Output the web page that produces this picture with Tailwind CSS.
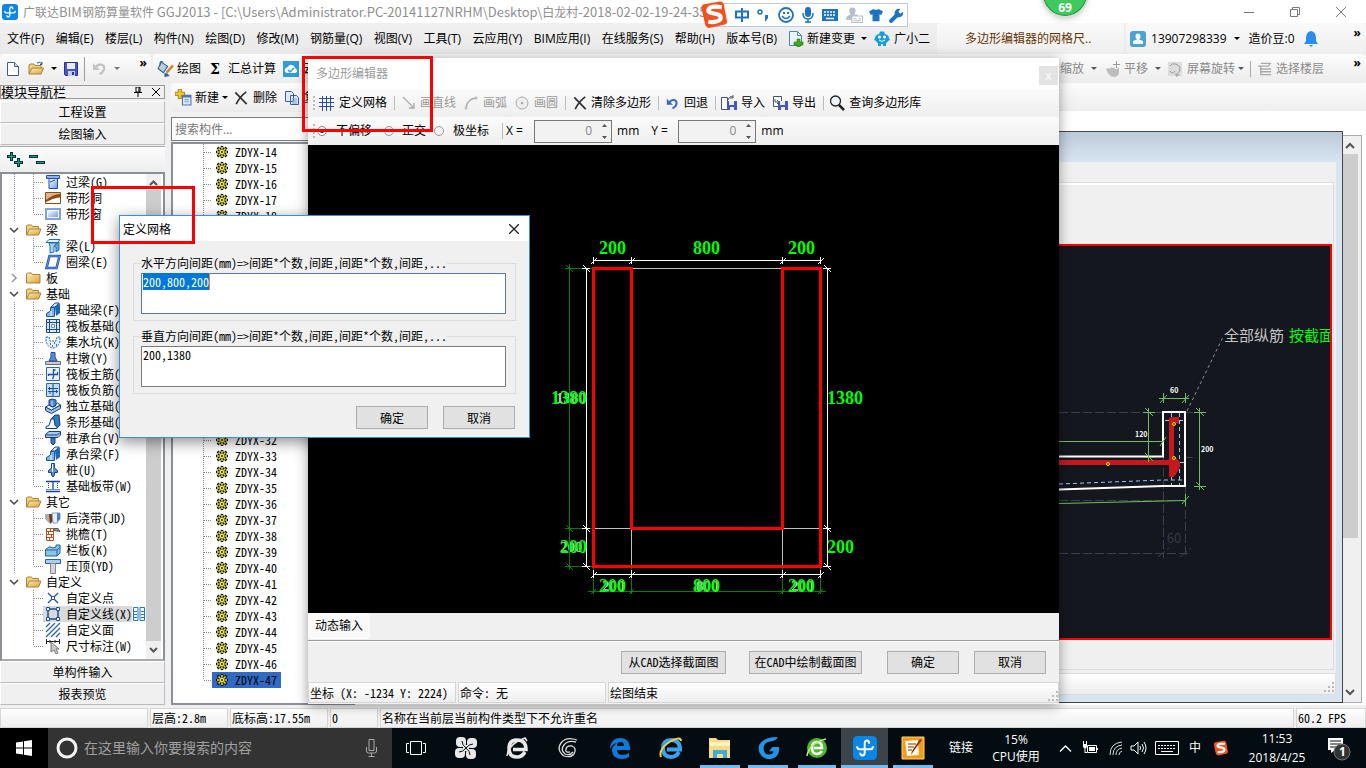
<!DOCTYPE html>
<html lang="zh-CN">
<head>
<meta charset="utf-8">
<title>广联达BIM钢筋算量软件 GGJ2013</title>
<script src="https://cdn.jsdelivr.net/npm/@tailwindcss/browser@4"></script>
</head>
<body class="relative flex h-screen flex-col overflow-hidden bg-[#f0f0f0] font-['Open_Sans','Noto_Sans_CJK_SC',sans-serif] text-xs leading-4 text-black">

<svg class="absolute size-0" aria-hidden="true">
  <defs>
    <linearGradient id="gb" x1="0" y1="0" x2="1" y2="1"><stop offset="0" stop-color="#fff"/><stop offset="1" stop-color="#6d9ae8"/></linearGradient>
    <linearGradient id="gy" x1="0" y1="0" x2="1" y2="1"><stop offset="0" stop-color="#fff1b8"/><stop offset="1" stop-color="#d9a13a"/></linearGradient>
  </defs>
  <symbol id="app" viewBox="0 0 16 16"><rect width="16" height="16" rx="3" fill="#0a86e6"/><path d="M10.800 5.200q0-2.200-1.500-2.200T7.800 5.200v5.800q0 2-1.500 2T4.800 11.200M2.800 6.800v.600q0 1.400 1.400 1.400h7.600q1.400 0 1.400-1.400v-.600" fill="none" stroke="#fff" stroke-width="1.300"/></symbol>
  <symbol id="folderopen" viewBox="0 0 16 16"><path d="M1 13V4l1-1h4l1 1.500h6V7" fill="#f3d27a" stroke="#a8803a"/><path d="M1 13 4 7h11.500L13 13z" fill="url(#gy)" stroke="#a8803a"/></symbol>
  <symbol id="folder" viewBox="0 0 16 16"><path d="M1 13V4l1-1h4l1 1.500h7.500V13z" fill="url(#gy)" stroke="#a8803a"/></symbol>
  <symbol id="undo" viewBox="0 0 16 16"><path d="M4 6.500C7 2.500 13 3 13 7.500c0 3-2 5-5 6.500" fill="none" stroke="currentColor" stroke-width="2.500"/><path d="M1 2v7.500h7.500z" fill="currentColor"/></symbol>
  <symbol id="cross" viewBox="0 0 16 16"><path d="M1.500 1.500 14.500 15M14 1Q7 6 2.500 15" fill="none" stroke="#333" stroke-width="2"/></symbol>
  <symbol id="gear" viewBox="0 0 12 12"><path d="M6 0v12M0 6h12M1.500 1.500l9 9M10.500 1.500l-9 9" stroke="#111" stroke-width="2.500"/><circle cx="6" cy="6" r="4.500" fill="#111"/><path d="M6 1v10M1 6h10M2.500 2.500l7 7M9.500 2.500l-7 7" stroke="#f3ea28" stroke-width="1.500"/><circle cx="6" cy="6" r="2.800" fill="#f3ea28" stroke="#333" stroke-width=".6"/><circle cx="6" cy="6" r="1" fill="#222"/></symbol>
  <symbol id="i-col" viewBox="0 0 16 16"><path d="M1.500 1.500h13v3h-13z" fill="#8db4f0" stroke="#1d4fa8"/><path d="M4 5v9.500h8.500V5" fill="url(#gb)" stroke="#1d4fa8"/><path d="M5 8l5-2" stroke="#1d4fa8"/></symbol>
  <symbol id="i-hole" viewBox="0 0 16 16"><path d="M.500 2.500h15v11H.500z" fill="#fff" stroke="#8a4a16"/><path d="M1 3h14v5Q8 8 1 12z" fill="#e2b48c"/><path d="M1 10Q8 4 15 4v3Q8 8 1 12z" fill="#8a4a16"/></symbol>
  <symbol id="i-win" viewBox="0 0 16 16"><path d="M0 2h16v12H0z" fill="#7f9fea"/><path d="M2.500 4.500h11v7h-11z" fill="url(#gb)" stroke="#fff"/></symbol>
  <symbol id="i-beam" viewBox="0 0 16 16"><path d="M1 4.500 4 1.500h11l-2 3z" fill="#e3f3fd" stroke="#1e6fb5"/><path d="M4 5h8L9 8v6l-4 1V8z" fill="#a5d5f5" stroke="#1e6fb5"/><path d="m9 8 5-4v8l-3 2V9z" fill="#5fa8dd" stroke="#1e6fb5"/></symbol>
  <symbol id="i-ring" viewBox="0 0 16 16"><path d="M4.500 2h10l-3 12h-10z" fill="#fff" stroke="#1b4fb0" stroke-width="2.500"/><path d="M4.500 2h10l-3 12h-10z" fill="none" stroke="#8db4f0" stroke-width=".7"/></symbol>
  <symbol id="i-fbeam" viewBox="0 0 16 16"><path d="M6 5 10 1h4l-4 4z" fill="#d0e8fa" stroke="#19559b"/><path d="M10 5l5-4v10l-4 3z" fill="#1a68b5"/><path d="M1.500 14.500v-3L5.500 9V5.500h4V14.500z" fill="#7fb5e2" stroke="#19559b"/><path d="M6 9v5" stroke="#fff"/></symbol>
  <symbol id="i-raft" viewBox="0 0 16 16"><path d="M1.500 1.500h13v13h-13z" fill="#dbe9fb" stroke="#19499b"/><path d="M4.500 1v14M11.500 1v14M1 4.500h14M1 11.500h14" stroke="#19499b"/><path d="M6.500 6.500h3v3h-3z" fill="#fff" stroke="#5a94d6"/></symbol>
  <symbol id="i-pit" viewBox="0 0 16 16"><path d="M1 3h3l1 4h6l1-4h3v4q-2 7-7 7T1 7z" fill="#e6f1fc" stroke="#1e6fb5" stroke-dasharray="2 1"/><path d="M5 10h1m3-1h1m-3 3h1m3-1h1" stroke="#124a90" stroke-width="1.500"/></symbol>
  <symbol id="i-pier" viewBox="0 0 16 16"><path d="M.500 11.500h15v3H.500z" fill="#c8ccd4" stroke="#666c78"/><path d="m4 11 2-4V2.500h4V7l2 4z" fill="#5a8ade" stroke="#234c92"/></symbol>
  <symbol id="i-bar" viewBox="0 0 16 16"><path d="M1.500 1.500h13v13h-13z" fill="#e8f2fd" stroke="#2a63bd"/><path d="M8.500 3v8q0 1.500-1.500 1.500M8.500 4h2M3.500 10V8.500h9V6" stroke="#1c4fa0" stroke-width="1.300" fill="none"/></symbol>
  <symbol id="i-bar2" viewBox="0 0 16 16"><path d="M1.500 1.500h13v13h-13z" fill="#c3ddf8" stroke="#2a63bd"/><path d="M8 2v12" stroke="#5a94d6" stroke-width="2"/><path d="M3 6.500h10M3 9.500h10M4.500 5v3M11.500 8v3M5 12V9.500" stroke="#1c4fa0" fill="none"/></symbol>
  <symbol id="i-iso" viewBox="0 0 16 16"><path d="m.500 9 6 3 9-5v3.500l-9 5-6-3z" fill="#9cc4ea" stroke="#153f82"/><path d="m.500 9 6 3 9-5-3-2-2 1v2L7 9 4 7z" fill="#eaf4fd" stroke="#153f82"/><path d="m4 2 3-1 4 1v5L8 9 4 7z" fill="#4d88d0" stroke="#153f82"/><path d="M7 3v5" stroke="#cfe4f8"/></symbol>
  <symbol id="i-strip" viewBox="0 0 16 16"><path d="m6 5 4-4h4l1 10-4 4z" fill="#2f7cc6" stroke="#153f82"/><path d="M1 14.500v-2l3-1 2-6.500h3l1 6.500 2 1v2z" fill="#f0f7fe" stroke="#153f82"/></symbol>
  <symbol id="i-cap" viewBox="0 0 16 16"><path d="M.500 4.500 4 1.500h11.500V5L13 7.500H.500z" fill="#a7cbee" stroke="#153f82"/><path d="M1 5h11.500L15 2.500" fill="none" stroke="#153f82"/><path d="M6 8h4v5l-2 2-2-2z" fill="#3c78c5" stroke="#153f82"/></symbol>
  <symbol id="i-pile" viewBox="0 0 16 16"><path d="M6.500 1.500h3V6l3 2.500v2h-3V13L8 15l-1.500-2v-2.500h-3v-2l3-2.500z" fill="#5a94d6" stroke="#153f82"/><path d="M7.500 2v8" stroke="#fff"/></symbol>
  <symbol id="i-band" viewBox="0 0 16 16"><path d="M1 3.500h14M1 13.500h14" stroke="#123f9c" stroke-width="1.500"/><path d="M3.500 5v6M12.500 5v6" stroke="#444" stroke-dasharray="1 1"/><path d="M8 4v8" stroke="#2a63bd" stroke-width="1.500"/><path d="M1 11.500h14" stroke="#5a94d6"/></symbol>
  <symbol id="i-post" viewBox="0 0 16 16"><path d="M0 4h7v8l-3 1-4-4z" fill="#a9adb8"/><path d="M4 4h5v6l-4 4z" fill="#7a3510"/><path d="M7 3h8v6l-3 4H8z" fill="#e6f0fa" stroke="#7ea2cc"/><path d="M12 3h3v6l-3 3z" fill="#4f7fbd"/></symbol>
  <symbol id="i-eave" viewBox="0 0 16 16"><path d="M1.500 2.500h7v12h-7z" fill="#fff" stroke="#b8501b"/><path d="M1 5.500h8M1 8.500h8M1 11.500h8M5.500 3v3M3.500 6v3M6.500 9v3M4.500 12v3" stroke="#b8501b"/><path d="M9 2.500h4l2 3-6-1z" fill="#999" stroke="#555"/></symbol>
  <symbol id="i-rail" viewBox="0 0 16 16"><path d="M.500 7.500 4 5h2l2 1 3-1V3h4v8l-3 3H.500z" fill="#8fc3e8" stroke="#1f6597"/><path d="M1 8h11l3-3M12 8v6" fill="none" stroke="#1f6597"/></symbol>
  <symbol id="i-top" viewBox="0 0 16 16"><path d="M.500 1.500h15v4H.500z" fill="#a8cdf6" stroke="#1f63c0"/><path d="M5.500 5.500h5v10h-5z" fill="#d5d5d5" stroke="#888"/></symbol>
  <symbol id="i-pt" viewBox="0 0 16 16"><path d="m3 3 10 10M13 3 3 13" stroke="#1a55a5" stroke-width="1.300"/><path d="M6.500 6.500h3v3h-3z" fill="#fff" stroke="#1a55a5"/></symbol>
  <symbol id="i-line" viewBox="0 0 16 16"><path d="M3 3h10v10H3z" fill="none" stroke="#1a4fa5" stroke-width="1.500"/><path d="M1.500 1.500h3v3h-3zM11.500 1.500h3v3h-3zM1.500 11.500h3v3h-3zM11.500 11.500h3v3h-3z" fill="#fff" stroke="#1a4fa5"/></symbol>
  <symbol id="i-face" viewBox="0 0 16 16"><path d="M1 5l4-4M1 10l9-9M1 15 15 1M6 15l9-9M11 15l4-4" stroke="#2a63bd" stroke-width="1.300"/></symbol>
  <symbol id="i-dim" viewBox="0 0 16 16"><path d="M1 3.500h14M1.500 1v5M14.500 1v5M5 2v3M10 2v3" stroke="#222"/><path d="M6 4v10l3-2 2 4 2-1-2-4h3z" fill="#c9c9c9" stroke="#777"/></symbol>
  <symbol id="sogou" viewBox="0 0 28 28"><path d="M4 4Q1 5 1.500 8L5 24q1 3 4 3l14-3q4-1 3-4L23 4q-1-3-4-2.500z" fill="#f4511e"/><path d="M21 7Q10 5 8 9.500c-1 5 12 2 12 7.500 0 4-7 5-12 4" fill="none" stroke="#fff" stroke-width="4"/></symbol>
  <symbol id="disk" viewBox="0 0 16 16"><path d="M1.500 1.500h13v13h-12l-1-1z" fill="#4a55c8" stroke="#2b3390"/><path d="M4 2h8v6H4z" fill="#e9ecff"/><path d="M5 10h7v5H5z" fill="#c7cbe6"/><path d="M9 11h2v3H9z" fill="#2b3390"/></symbol>
</svg>

<!-- title bar -->
<header class="flex h-[23px] shrink-0 items-center gap-[5px] bg-white pl-[2px] pr-[20px] text-[#8f8f8f]">
  <svg class="size-4"><use href="#app"/></svg>
  <h1 class="whitespace-nowrap font-['Noto_Sans_CJK_SC',sans-serif] text-xs">广联达<span class="text-[13px]">BIM</span>钢筋算量软件<span class="text-[13px]"> GGJ2013 - [C:\Users\Administrator.PC-20141127NRHM\Desktop\</span>白龙村<span class="text-[13px]">-2018-02-02-19-24-35</span></h1>
  <div class="ml-auto flex gap-[36px]">
    <button aria-label="最小化"><svg class="size-[10px]" viewBox="0 0 10 10"><path d="M0 5.500h10" stroke="#777"/></svg></button>
    <button aria-label="还原"><svg class="size-[10px]" viewBox="0 0 10 10"><path d="M.500 2.500h7v7h-7zM2.500 2V.500h7v7H8" fill="none" stroke="#777"/></svg></button>
    <button aria-label="关闭"><svg class="size-[10px]" viewBox="0 0 10 10"><path d="m0 0 10 10M10 0 0 10" stroke="#777"/></svg></button>
  </div>
</header>

<!-- menu bar -->
<nav class="flex h-[31px] shrink-0 items-center whitespace-nowrap bg-linear-to-b from-[#f0f0f0] to-[#e9e9e9] pl-[7px]">
  <div class="flex w-[781px] shrink-0 justify-between pr-[11px]">
    <button>文件(F)</button><button>编辑(E)</button><button>楼层(L)</button><button>构件(N)</button><button>绘图(D)</button><button>修改(M)</button><button>钢筋量(Q)</button><button>视图(V)</button><button>工具(T)</button><button>云应用(Y)</button><button>BIM应用(I)</button><button>在线服务(S)</button><button>帮助(H)</button><button>版本号(B)</button>
  </div>
  <button class="flex items-center gap-[3px]"><svg class="size-4" viewBox="0 0 16 16"><path d="M1.500.500h8l4 4v10h-12z" fill="#eaf5fd" stroke="#4b87b5"/><path d="M9.500.500v4h4" fill="none" stroke="#4b87b5"/><path d="M9 8h3v3h3v3h-3v3H9v-3H6v-3h3z" fill="#3fae1e" stroke="#226f0e" stroke-width=".6"/></svg>新建变更</button>
  <svg class="ml-[6px] mr-[7px] h-[3px] w-[6px] shrink-0" viewBox="0 0 6 3"><path d="M0 0h6L3 3z"/></svg>
  <button class="flex items-center gap-[4px]"><svg class="size-4" viewBox="0 0 16 16"><path d="M5 3 6 .500h4L11 3q4 1 4 4l1 2-2 1q-1 2-2 2v3h-3v-2H7v2H4v-3q-1 0-2-2L0 9l1-2q0-3 4-4" fill="#199be0"/><circle cx="5.500" cy="6" r="1.500" fill="#fff"/><circle cx="10.500" cy="6" r="1.500" fill="#fff"/><path d="M5 9q3 3 6 0" fill="none" stroke="#fff"/></svg>广小二</button>
  <div class="ml-[7px] flex h-full w-[187px] shrink-0 items-center rounded bg-linear-to-b from-[#fafafa] to-[#eee] pl-[28px] text-[#663300]">多边形编辑器的网格尺..</div>
  <div class="ml-[2px] flex h-full flex-1 items-center rounded bg-linear-to-b from-[#fafafa] to-[#eee] pl-[4px] pr-[5px]">
    <svg class="size-4" viewBox="0 0 16 16"><rect width="16" height="16" rx="3" fill="#4aa3d6"/><path d="M5.500 5.500a2.500 3 0 0 1 5 0q0 2-1.500 3l4 1.500v3h-10v-3l4-1.500q-1.500-1-1.500-3" fill="#fff"/></svg>
    <span class="ml-[5px]">13907298339</span>
    <svg class="ml-[7px] h-[3px] w-[6px]" viewBox="0 0 6 3"><path d="M0 0h6L3 3z"/></svg>
    <span class="ml-[9px]">造价豆:0</span>
    <svg class="ml-[9px] h-[16px] w-[14px]" viewBox="0 0 14 16"><path d="M7 0q5 1 5 7v3l2 3H0l2-3V7q0-6 5-7M5 14h4l-2 2z" fill="#2a8cf0"/></svg>
    <span class="mb-3 ml-auto text-xs font-bold leading-3">»</span>
  </div>
</nav>

<!-- main tool bar -->
<div class="flex h-[29px] shrink-0 items-center whitespace-nowrap">
  <div class="flex h-full w-[151px] shrink-0 items-center rounded bg-linear-to-b from-[#fcfcfc] to-[#ececec] pl-[5px]">
    <button aria-label="新建"><svg class="size-4" viewBox="0 0 16 16"><path d="M2.500 1.500h7l4 4v9h-11z" fill="#fff" stroke="#3f5c85"/><path d="M9.500 1.500v4h4" fill="#cfdcf0" stroke="#3f5c85"/></svg></button>
    <button class="ml-[6px]" aria-label="打开"><svg class="h-4 w-[18px]" viewBox="0 0 16 16"><use href="#folderopen"/><path d="M9 2q3-2 5 1m0-2v2.500h-2" fill="none" stroke="#35517a"/></svg></button>
    <svg class="ml-[6px] h-[3px] w-[6px]" viewBox="0 0 6 3"><path d="M0 0h6L3 3z"/></svg>
    <button class="ml-[6px]" aria-label="保存"><svg class="size-4"><use href="#disk"/></svg></button>
    <div class="ml-[5px] h-[24px] w-px bg-[#9a9a9a]"></div>
    <button class="ml-[7px] text-[#c4c4c4]" aria-label="撤销"><svg class="size-[15px]"><use href="#undo"/></svg></button>
    <svg class="ml-[7px] h-[3px] w-[6px]" viewBox="0 0 6 3"><path d="M0 0h6L3 3z" fill="#777"/></svg>
    <span class="mb-3 ml-auto mr-[4px] text-xs font-bold leading-3">»</span>
  </div>
  <div class="ml-[2px] flex h-full flex-1 items-center rounded bg-linear-to-b from-[#fcfcfc] to-[#ececec] pl-[4px] pr-[5px]">
    <button class="flex items-center gap-[3px]"><svg class="size-[17px]" viewBox="0 0 16 16"><path d="M4 2 10 6 6 12 1 8z" fill="#b9cfe8" stroke="#355a8a"/><path d="M3 5Q2 0 6 2" fill="none" stroke="#355a8a"/><path d="M15 5 9 12" stroke="#c98b2a" stroke-width="2.500"/><path d="m7 12 3 1 2 2-5 1z" fill="#2e62a8"/></svg>绘图</button>
    <button class="ml-[9px] flex items-center gap-[8px]"><span class="font-['DejaVu_Serif',serif] text-sm font-bold">Σ</span>汇总计算</button>
    <button class="ml-[7px] flex items-center gap-[4px]"><svg class="size-4" viewBox="0 0 16 16"><path d="M0 0h16v16H0z" fill="#2f9ddb"/><path d="M4 12q-3-1-2-4 1-2 3-2 1-3 4-2 2 0 3 3 2 1 2 3t-3 2z" fill="#fff"/><path d="m5 9 2 2 4-4" fill="none" stroke="#2f9ddb" stroke-width="1.500"/></svg>云检查</button>
    <div class="ml-auto flex w-[301px] items-center text-[#8a8a8a]">
      <button>缩放</button>
      <svg class="ml-[7px] h-[3px] w-[6px]" viewBox="0 0 6 3"><path d="M0 0h6L3 3z" fill="#555"/></svg>
      <button class="ml-[8px] flex items-center gap-[3px]"><svg class="size-4" viewBox="0 0 16 16"><path d="M1 8l2-1 2 1 1-2 2 1 1-1 1 2h2l2-2v6q-1 4-5 4-5 0-8-8" fill="#bdbdbd"/><path d="M11.500 0v7M8 3.500h7" stroke="#999"/></svg>平移</button>
      <svg class="ml-[7px] h-[3px] w-[6px]" viewBox="0 0 6 3"><path d="M0 0h6L3 3z" fill="#555"/></svg>
      <button class="ml-[6px] flex items-center gap-[4px]"><svg class="size-4" viewBox="0 0 16 16"><path d="M1 1h14v14H1z" fill="#ddd"/><path d="M3 5q2-3 6-2 5 2 4 6-1 3-4 5M3 10q2 4 5 0" fill="none" stroke="#999"/><path d="m8 12 1 4 4-2z" fill="#aaa"/></svg>屏幕旋转</button>
      <svg class="ml-[3px] h-[3px] w-[6px]" viewBox="0 0 6 3"><path d="M0 0h6L3 3z" fill="#555"/></svg>
      <div class="mx-[6px] h-[16px] w-px bg-[#aaa]"></div>
      <button class="flex items-center gap-[4px]"><svg class="size-[15px]" viewBox="0 0 16 16"><path d="M4 2.500h11M1 5.500h11l2-2M4 6v9M4 8.500h11M4 11.500h11M4 14.500h11" fill="none" stroke="#aaa" stroke-width="1.500"/></svg>选择楼层</button>
      <span class="mb-3 ml-auto text-xs font-bold leading-3 text-black">»</span>
    </div>
  </div>
</div>

<main class="flex min-h-0 flex-1 font-['Noto_Sans_Mono_CJK_SC','Noto_Sans_CJK_SC',monospace]">
  <!-- module navigation -->
  <aside class="flex w-[165px] shrink-0 flex-col pb-[3px] pt-[2px]">
    <div class="mb-[2px] flex h-[14px] items-center border border-[#999] pr-[4px] text-[13px] leading-3">模块导航栏
      <svg class="ml-auto h-[10px] w-[8px]" viewBox="0 0 8 10"><path d="M2 0h4v5H2zM5 0v5M0 5.500h8M4 6v4" fill="none" stroke="#000"/></svg>
      <svg class="ml-[10px] size-[8px]" viewBox="0 0 8 8"><path d="m0 0 8 8M8 0 0 8" stroke="#000"/></svg>
    </div>
    <button class="h-[22px] border border-[#bbb] border-t-white border-l-white">工程设置</button>
    <button class="h-[22px] border border-[#bbb] border-t-white border-l-white">绘图输入</button>
    <div class="mt-px flex h-[26px] items-center gap-[6px] border-t border-[#aaa] bg-linear-to-b from-[#fcfcfc] to-[#eee] pl-[7px]">
      <button aria-label="全部展开"><svg class="size-4" viewBox="0 0 16 16"><path d="M0 4.500h9M4.500 0v9M7 10.500h9M11.500 6v9" stroke="#033" stroke-width="3"/><path d="M1 4.500h7M4.500 1v7M8 10.500h7M11.500 7v7" stroke="#16a085"/></svg></button>
      <button aria-label="全部折叠"><svg class="size-4" viewBox="0 0 16 16"><path d="M0 4.500h9M7 10.500h9" stroke="#033" stroke-width="3"/><path d="M1 4.500h7M8 10.500h7" stroke="#16a085"/></svg></button>
    </div>
    <div class="flex min-h-0 flex-1 border-2 border-[#8a8f98] border-b-[#aaa] bg-white">
      <ul id="modules" class="min-w-0 flex-1 overflow-hidden"></ul>
      <div class="mr-[2px] flex w-[15px] flex-col bg-[#f0f0f0]">
        <svg class="h-[16px] w-[15px]" viewBox="0 0 15 16"><path d="m4 11 3.500-3.500L11 11" fill="none" stroke="#555" stroke-width="2"/></svg>
        <div class="flex-1 bg-[#cdcdcd]"></div>
        <svg class="h-[18px] w-[15px]" viewBox="0 0 15 18"><path d="m4 7 3.500 3.500L11 7" fill="none" stroke="#555" stroke-width="2"/></svg>
      </div>
    </div>
    <button class="h-[22px] shrink-0 border border-[#bbb] border-t-white border-l-white">单构件输入</button>
    <button class="h-[22px] shrink-0 border border-[#bbb] border-t-white border-l-white">报表预览</button>
  </aside>

  <!-- component list -->
  <section class="ml-[6px] flex w-[184px] shrink-0 flex-col pb-[3px]">
    <div class="flex h-[29px] shrink-0 items-center rounded bg-linear-to-b from-[#fcfcfc] to-[#ececec] pl-[4px] font-['Open_Sans','Noto_Sans_CJK_SC',sans-serif]">
      <button class="flex items-center gap-[3px]"><svg class="size-[17px]" viewBox="0 0 16 16"><path d="M7 6h8v9H7z" fill="#dbe8f8" stroke="#4a77b5"/><path d="M7 6h8v2H7z" fill="#4a77b5"/><path d="M9 10h4m-4 2h4" stroke="#7fa3d0"/><path d="M3 0h3v3h3v3H6v3H3V6H0V3h3z" fill="#f5c52c" stroke="#8a6a10" stroke-width=".7"/></svg>新建</button>
      <svg class="ml-[3px] h-[3px] w-[6px]" viewBox="0 0 6 3"><path d="M0 0h6L3 3z"/></svg>
      <button class="ml-[6px] flex items-center gap-[5px]"><svg class="size-[14px]"><use href="#cross"/></svg>删除</button>
      <button class="ml-[7px] flex items-center gap-[4px]"><svg class="size-4" viewBox="0 0 16 16"><path d="M1.500 1.500h6l2 2v8h-8zM6.500 5.500h6l2 2v7h-8z" fill="#dfe9f8" stroke="#3a5f9c"/><path d="M8 9h5m-5 2h5m-5 2h5" stroke="#7fa3d0"/></svg>复制</button>
    </div>
    <input type="text" aria-label="搜索构件" placeholder="搜索构件..." class="mt-[5px] h-[24px] shrink-0 border border-[#7a7a7a] bg-white px-[3px] font-['Open_Sans','Noto_Sans_CJK_SC',sans-serif] text-xs placeholder:text-[#777]">
    <div class="mt-px min-h-0 flex-1 border-2 border-[#8a8f98] bg-white">
      <ul id="components" class="h-full overflow-hidden"></ul>
    </div>
  </section>

  <!-- drawing workspace -->
  <section class="flex min-w-0 flex-1 flex-col pb-[3px]">
    <div class="h-[28px] shrink-0 bg-linear-to-b from-[#fcfcfc] to-[#eee]"></div>
    <div class="flex min-h-0 flex-1 bg-white pb-[2px] pr-[4px] pt-[20px]">
      <div class="flex min-w-0 flex-1 flex-col border border-[#444] bg-[#d8e4f0] bg-linear-to-b from-[#bccbd9] to-[#d8e4f1] to-[30px] pb-[7px] pr-[6px] pt-[30px]">
        <div class="flex min-h-0 flex-1 flex-col bg-[#f0f0f0] pt-[20px]">
          <div class="mr-[2px] flex min-h-0 flex-1 flex-col border border-[#ddd] pb-[29px] pr-px pt-[61px] shadow-[inset_0_2px_0_#fff]">
            <div class="flex min-h-0 flex-1 justify-end overflow-hidden border-2 border-[#f00] bg-[#14171e]">
              <svg class="h-[392px] w-[271px] shrink-0 font-['Noto_Sans_CJK_SC',sans-serif]" viewBox="1059 246 271 392" fill="none">
                <path d="M1059 412.500h104M1185 457.500h8M1185 412.500h8M1163.500 456v102M1185.500 486v72M1059 553.500h132M1158 557l11-9M1180 557l11-9M1059 500.500h126" stroke="#3a414c" stroke-dasharray="9 3"/>
                <text x="1174" y="543" text-anchor="middle" font-size="13" fill="#333b46">60</text>
                <path d="M1187 411l36-74" stroke="#8b8f96" stroke-dasharray="3 3"/>
                <path d="M1059 484l104-4h22M1171.500 413v72M1179.500 413v72M1165 420.500h20M1180 462.500h5" stroke="#9dc6f5" stroke-dasharray="4 3"/>
                <path d="M1059 456.500h104V412h22v74h-22l-104 3.500" stroke="#fff" stroke-width="2"/>
                <path d="M1059 462.500h119M1171.500 477v-56h7.500" stroke="#c8181e" stroke-width="5"/>
                <path d="M1169 418l3-1h7v5h-7zM1169 476h6l5-9v-5l-4-4z" fill="#c8181e"/>
                <g fill="#5a3808" stroke="#ffe11a"><circle cx="1108" cy="464" r="1.500"/><circle cx="1174" cy="424" r="1.500"/><circle cx="1174" cy="458" r="1.500"/></g>
                <path d="M1159 398.500h30M1163.500 393v10M1185.500 393v10M1160 403l7-8M1182 403l7-8M1148.500 408v54M1143 412.500h12M1143 457.500h12M1145 408l8 8M1145 453l8 8M1199.500 408v82M1194 412.500h12M1194 486.500h12M1196 408l8 8M1196 482l8 8M1059 441.500h104M1160 446l6-9M1059 503.500l126-3M1185.500 494v12M1182 504l7-8" stroke="#6fbf5f"/>
                <g fill="#fff" font-size="7" font-weight="bold"><text x="1170" y="393">60</text><text x="1135" y="437">120</text><text x="1201" y="452">200</text></g>
                <text x="1224" y="341" font-size="15" fill="#c4c4c4">全部纵筋</text><text x="1289" y="341" font-size="15" fill="#0f0">按截面</text>
              </svg>
            </div>
          </div>
          <div class="mt-[3px] flex h-[22px] shrink-0 items-end justify-end border border-[#ddd] bg-linear-to-b from-white to-[#eee] p-px">
            <svg class="size-[11px]" viewBox="0 0 11 11"><path d="M9 0h2v2H9zM5 4h2v2H5zM9 4h2v2H9zM1 8h2v2H1zM5 8h2v2H5zM9 8h2v2H9z" fill="#bbb"/></svg>
          </div>
        </div>
      </div>
      <div class="mt-[4px] flex w-[19px] flex-col border border-l-0 border-[#aab] bg-[#f0f0f0] pr-[3px]">
        <svg class="h-[18px] w-[15px]" viewBox="0 0 15 18"><path d="m3 12 4-4 4 4" fill="none" stroke="#555" stroke-width="2"/></svg>
        <div class="basis-[384px] bg-[#cdcdcd]"></div>
        <svg class="mt-auto h-[22px] w-[15px]" viewBox="0 0 15 22"><path d="m3 10 4 4 4-4" fill="none" stroke="#555" stroke-width="2"/></svg>
      </div>
    </div>
  </section>
</main>

<!-- status bar -->
<footer class="flex h-[20px] shrink-0 gap-[2px] whitespace-nowrap font-['Noto_Sans_Mono_CJK_SC','Noto_Sans_CJK_SC',monospace] leading-[17px]">
  <div class="w-[148px] border border-[#d5d5d5] bg-linear-to-b from-white to-[#eee]"></div>
  <div class="w-[78px] border border-[#d5d5d5] bg-linear-to-b from-white to-[#eee] pl-px">层高:2.8m</div>
  <div class="w-[98px] border border-[#d5d5d5] bg-linear-to-b from-white to-[#eee] pl-px">底标高:17.55m</div>
  <div class="w-[48px] border border-[#d5d5d5] bg-linear-to-b from-white to-[#eee] pl-px">0</div>
  <div class="flex-1 border border-[#d5d5d5] bg-linear-to-b from-white to-[#eee] pl-px">名称在当前层当前构件类型下不允许重名</div>
  <div class="w-[70px] border border-[#d5d5d5] bg-linear-to-b from-white to-[#eee] pl-px">60.2 FPS</div>
</footer>

<!-- taskbar -->
<div class="flex h-[40px] shrink-0 items-center bg-[#020c11] text-white">
  <button class="flex h-full w-[48px] shrink-0 items-center justify-center bg-black" aria-label="开始"><svg class="size-4" viewBox="0 0 16 16"><path d="M0 2.500 7 1.500v6H0zM8 1.300 16 0v7.500H8zM0 8.500h7v6l-7-1zM8 8.500h8V16l-8-1.300z" fill="#fff"/></svg></button>
  <label class="flex h-full w-[344px] shrink-0 items-center bg-[#333] pl-[8px] pr-[14px]">
    <svg class="size-[22px] shrink-0" viewBox="0 0 22 22"><circle cx="11" cy="11" r="9" fill="none" stroke="#f4f4f4" stroke-width="3"/></svg>
    <input type="text" aria-label="搜索" placeholder="在这里输入你要搜索的内容" class="ml-[6px] min-w-0 flex-1 bg-transparent text-sm placeholder:text-[#a0a0a0]">
    <svg class="h-[20px] w-[13px] shrink-0" viewBox="0 0 13 20"><path d="M4 1.500h5v11H4zM1.500 9v4q0 2 2 2h6q2 0 2-2V9M6.500 15v3.500M3.500 18.500h6" fill="none" stroke="#aaa"/></svg>
  </label>
  <button class="flex h-full w-[48px] shrink-0 items-center justify-center" aria-label="任务视图"><svg class="h-[14px] w-[20px]" viewBox="0 0 20 14"><path d="M4.500.500h11v13h-11zM3 2.500H.500v9H3M17 2.500h2.500v9H17" fill="none" stroke="#fff"/></svg></button>
  <button class="flex h-full w-[52px] shrink-0 items-center justify-center" aria-label="四叶草"><svg class="size-[22px]" viewBox="0 0 22 22"><g fill="#e8e8e8"><rect x="1" y="0" width="10" height="10" rx="4"/><rect x="12" y="1" width="10" height="10" rx="4"/><rect x="11" y="12" width="10" height="10" rx="4"/><rect x="0" y="11" width="10" height="10" rx="4"/><rect x="8" y="8" width="6" height="6"/></g><path d="M11 11Q7 8 7 4m4 7q3-4 7-4m-7 4q4 3 4 7m-4-7q-3 4-7 4" fill="none" stroke="#020c11"/></svg></button>
  <button class="flex h-full w-[50px] shrink-0 items-center justify-center" aria-label="浏览器"><svg class="size-[24px]" viewBox="0 0 24 24"><path d="M20 16q-3 5-8 5-8 0-8-8.500T12 4q9 0 9 9.500H8" fill="none" stroke="#e8e8e8" stroke-width="3.500"/><path d="M2 20Q3 8 20 2l2 3" fill="none" stroke="#e8e8e8" stroke-width="1.500"/></svg></button>
  <button class="flex h-full w-[51px] shrink-0 items-center justify-center" aria-label="旋风"><svg class="size-[22px]" viewBox="0 0 22 22"><path d="M20 3Q9-1 4 6t3 13q7 2 10-2 3-6-2-8-5-1-6 3t4 3M19 5q-8-2-12 3t1 9q5 2 8-2" fill="none" stroke="#ddd" stroke-width="1.300"/></svg></button>
  <button class="flex h-full w-[54px] shrink-0 items-center justify-center" aria-label="Edge"><svg class="size-[22px]" viewBox="0 0 22 22"><path d="M1 10Q3 1 11 1q9 0 10 9v3H8q0 5 6 5 3 0 6-2v4q-3 2-7 2-9 0-10-8 0-5 5-8-5 1-7 6M8 9h7q0-4-3.500-4T8 9" fill="#0a7adb"/></svg></button>
  <button class="flex h-full w-[48px] shrink-0 items-center justify-center" aria-label="Internet Explorer"><svg class="size-[24px]" viewBox="0 0 24 24"><path d="M20 16q-3 5-8 5-8 0-8-8.500T12 4q9 0 9 9.500H8" fill="none" stroke="#38a3ea" stroke-width="4"/><path d="M2 21Q-1 13 12 5q10-5 10 0" fill="none" stroke="#f5cf3a" stroke-width="2"/></svg></button>
  <button class="flex h-full w-[49px] shrink-0 flex-col items-center pt-[9px]" aria-label="文件资源管理器"><svg class="h-[22px] w-[24px]" viewBox="0 0 24 22"><path d="M1 1h7l2 2h12v18H1z" fill="#f8dc85"/><path d="M2 5h20v4H2z" fill="#fff2bd"/><path d="M5 21v-8h14v8h-4v-4H9v4z" fill="#40a9e0"/></svg><span class="mt-auto h-[3px] w-[40px] bg-[#76b9ed]"></span></button>
  <button class="flex h-full w-[48px] shrink-0 flex-col items-center pt-[8px]" aria-label="旋风下载"><svg class="size-[24px]" viewBox="0 0 22 22"><path d="M20 1q-2 4-7 4-6 1-6 6 0 6 5 6 4 0 4-3h-4l3-4h6q1 7-4 10-6 3-11-1-5-5-3-11Q7 1 20 1" fill="#1f96ea"/></svg><span class="mt-auto h-[3px] w-[40px] bg-[#76b9ed]"></span></button>
  <button class="flex h-full w-[49px] shrink-0 flex-col items-center pt-[8px]" aria-label="360浏览器"><svg class="size-[24px]" viewBox="0 0 24 24"><circle cx="12" cy="12" r="10" fill="#4cb82b"/><path d="M17 15q-2 3-5 3-5 0-5-6t5-6q5 0 5 6H9" fill="none" stroke="#fff" stroke-width="2.500"/><path d="M2 20Q4 7 21 3" fill="none" stroke="#b9eb8e" stroke-width="1.500"/></svg><span class="mt-auto h-[3px] w-[38px] bg-[#76b9ed]"></span></button>
  <button class="flex h-full w-[47px] shrink-0 flex-col items-center bg-[#3a4449] pt-[8px]" aria-label="广联达"><svg class="size-[24px]"><use href="#app"/></svg><span class="mt-auto h-[3px] w-full bg-[#76b9ed]"></span></button>
  <button class="flex h-full w-[49px] shrink-0 flex-col items-center pt-[8px]" aria-label="便笺"><svg class="size-[24px]" viewBox="0 0 24 24"><path d="M1 1h22v22H1z" fill="#f39a1c" stroke="#ffd76b"/><path d="m4 5 13-1 1 15-12 1z" fill="#fff8e4"/><path d="M7 8h8m-8 3h6m-6 3h4" stroke="#7a3d0a"/><path d="m21 4-9 12-2 3 1-4 8-12z" fill="#8a3608"/></svg><span class="mt-auto h-[3px] w-[40px] bg-[#76b9ed]"></span></button>
  <div class="ml-auto flex h-full shrink-0 items-center whitespace-nowrap pr-[15px] text-xs">
    <span>链接</span>
    <div class="ml-[18px] w-[50px] text-center leading-[17px]">15%<br>CPU使用</div>
    <svg class="ml-[18px] h-[7px] w-[13px]" viewBox="0 0 13 7"><path d="m1 6.500 5.500-5.500L12 6.500" fill="none" stroke="#fff" stroke-width="1.300"/></svg>
    <svg class="ml-[10px] h-[14px] w-[16px]" viewBox="0 0 16 14"><path d="M5.500 4.500h9v7h-9z" stroke="#fff" fill="none"/><path d="M7 6h6v4H7zM15 7h1v2h-1zM1 3h4v3L3.500 7.500V11H5v1H2.500V7.500L1 6zM1 0h1v3H1zM4 0h1v3H4z" fill="#fff"/></svg>
    <svg class="ml-[11px] size-[14px]" viewBox="0 0 14 14"><path d="M1 14Q1 2 13 1M4 14Q4 5 13 4M7 14Q7 8 13 7M10 14q0-3 3-4" fill="none" stroke="#ddd"/></svg>
    <svg class="ml-[7px] h-[14px] w-[17px]" viewBox="0 0 17 14"><path d="M1 5h3l4-4v12L4 9H1zM10 5q1 2 0 4M12 3q3 4 0 8M14 1q4 6 0 12" fill="none" stroke="#fff"/></svg>
    <svg class="ml-[8px] h-[14px] w-[24px]" viewBox="0 0 24 14"><path d="M.500.500h23v13H.500z" fill="none" stroke="#fff"/><path d="M3 4.500h18M3 7.500h18" stroke="#fff" stroke-dasharray="2 1"/><path d="M6 10.500h12" stroke="#fff"/></svg>
    <span class="ml-[10px]">中</span>
    <svg class="ml-[12px] size-4"><use href="#sogou"/></svg>
    <div class="ml-[16px] w-[64px] text-center leading-[19px]">11:53<br>2018/4/25</div>
    <button class="relative ml-[18px]" aria-label="通知"><svg class="h-[26px] w-[24px]" viewBox="0 0 24 26"><path d="M1 3h15v12H8l-4 3v-3H1z" fill="#fff"/><path d="M3 6h11M3 9h11M3 12h7" stroke="#020c11"/><circle cx="15" cy="17" r="8" fill="#333" stroke="#777"/></svg><span class="absolute left-[12px] top-[9px] text-xs font-bold">1</span></button>
  </div>
</div>

<!-- polygon editor window -->
<section class="absolute left-[308px] top-[58px] flex h-[646px] w-[751px] flex-col bg-[#f0f0f0] shadow-[0_2px_12px_rgba(0,0,0,0.4)]">
  <div class="flex h-[31px] shrink-0 items-center bg-white pl-[8px] pr-px text-[#999]"><h2>多边形编辑器</h2><button aria-label="关闭" class="ml-auto mt-[4px] size-[19px] bg-[#e3e3e3] text-xs leading-4 text-white">x</button></div>
  <div class="flex h-[28px] shrink-0 items-center whitespace-nowrap rounded bg-linear-to-b from-[#fbfbfb] to-[#eee] pl-[5px]">
    <svg class="h-[15px] w-[2px]" viewBox="0 0 2 15"><path d="M1 0v15" stroke="#bbb" stroke-width="2" stroke-dasharray="2 2"/></svg>
    <button class="ml-[4px] flex items-center gap-[5px]"><svg class="size-[15px]" viewBox="0 0 15 15"><path d="M0 2.500h15M0 6.500h15M0 10.500h15M3.500 0v15M7.500 0v15M11.500 0v15" stroke="#2450a8"/></svg>定义网格</button>
    <div class="mx-[7px] h-[14px] w-px bg-[#bbb]"></div>
    <button class="flex items-center gap-[4px] text-[#999]" disabled><svg class="size-[14px]" viewBox="0 0 14 14"><path d="m1 1 11 11M12 7v5H7" fill="none" stroke="#aaa" stroke-width="1.300"/></svg>画直线</button>
    <button class="ml-[8px] flex items-center gap-[5px] text-[#999]" disabled><svg class="size-[14px]" viewBox="0 0 14 14"><path d="M2 12Q3 3 12 2" fill="none" stroke="#aaa" stroke-width="1.300"/><circle cx="2" cy="12" r="1.500" fill="#bbb"/><circle cx="12" cy="2" r="1.500" fill="#bbb"/></svg>画弧</button>
    <button class="ml-[8px] flex items-center gap-[5px] text-[#999]" disabled><svg class="size-[14px]" viewBox="0 0 14 14"><circle cx="7" cy="7" r="6" fill="#eee" stroke="#aaa"/><circle cx="7" cy="7" r="1.200" fill="#aaa"/></svg>画圆</button>
    <div class="mx-[7px] h-[14px] w-px bg-[#bbb]"></div>
    <button class="flex items-center gap-[4px]"><svg class="size-[14px]"><use href="#cross"/></svg>清除多边形</button>
    <div class="mx-[7px] h-[14px] w-px bg-[#bbb]"></div>
    <button class="flex items-center gap-[5px]"><svg class="size-[13px] text-[#3568c8]"><use href="#undo"/></svg>回退</button>
    <div class="ml-[7px] mr-[5px] h-[14px] w-px bg-[#bbb]"></div>
    <button class="flex items-center gap-[4px]"><svg class="size-4" viewBox="0 0 16 16"><path d="M.500 2.500h6v12h-6z" fill="#fff" stroke="#456"/><path d="M7 5q2-5 5-3m0-2v3H9" fill="none" stroke="#456"/><path d="M6 6h10v9H6z" fill="#4a55b8"/><path d="M8 6h5v4H8zM9 12h4v3H9z" fill="#e9ecff"/></svg>导入</button>
    <button class="ml-[7px] flex items-center gap-[4px]"><svg class="size-4" viewBox="0 0 16 16"><path d="M1.500 1.500h8v10h-8z" fill="#fff" stroke="#456"/><path d="M3 4v3h4M5 5l2 2-2 2" fill="none" stroke="#456"/><path d="M6 6h10v9H6z" fill="#4a55b8"/><path d="M8 6h5v4H8zM9 12h4v3H9z" fill="#e9ecff"/></svg>导出</button>
    <div class="ml-[7px] mr-[5px] h-[14px] w-px bg-[#bbb]"></div>
    <button class="flex items-center gap-[4px]"><svg class="size-4" viewBox="0 0 16 16"><circle cx="6.500" cy="6" r="5" fill="#e8f6fc" stroke="#222" stroke-width="1.300"/><path d="m10 10 5 5" stroke="#222" stroke-width="2.500"/></svg>查询多边形库</button>
  </div>
  <div class="flex h-[28px] shrink-0 items-center whitespace-nowrap rounded bg-linear-to-b from-[#fbfbfb] to-[#eee] pl-[5px]">
    <svg class="h-[15px] w-[2px]" viewBox="0 0 2 15"><path d="M1 0v15" stroke="#bbb" stroke-width="2" stroke-dasharray="2 2"/></svg>
    <label class="ml-[2px] flex items-center gap-[9px]"><input type="radio" name="off" checked class="size-[10px] appearance-none rounded-full border border-[#888] bg-white bg-radial from-[#333] from-35% to-white to-40%">不偏移</label>
    <label class="ml-[12px] flex items-center gap-[8px]"><input type="radio" name="off" class="size-[10px] appearance-none rounded-full border border-[#999] bg-[#f4f4f4]">正交</label>
    <label class="ml-[8px] flex items-center gap-[9px]"><input type="radio" name="off" class="size-[10px] appearance-none rounded-full border border-[#999] bg-[#f4f4f4]">极坐标</label>
    <div class="ml-[13px] mr-[3px] h-[16px] w-px bg-[#bbb]"></div>
    <label class="flex items-center"><span class="w-[28px]">X =</span><span class="flex h-[23px] w-[78px] items-center border border-[#777] bg-[#f2f2f2] pr-[4px]"><input type="text" value="0" class="w-full min-w-0 bg-transparent pr-[10px] text-right text-[#888]"><svg class="h-[15px] w-[5px] shrink-0" viewBox="0 0 5 15"><path d="m0 3 2.500-3L5 3zM0 12l2.500 3L5 12z" fill="#555"/></svg></span><span class="ml-[5px]">mm</span></label>
    <label class="ml-[12px] flex items-center"><span class="w-[27px]">Y =</span><span class="flex h-[23px] w-[78px] items-center border border-[#777] bg-[#f2f2f2] pr-[4px]"><input type="text" value="0" class="w-full min-w-0 bg-transparent pr-[10px] text-right text-[#888]"><svg class="h-[15px] w-[5px] shrink-0" viewBox="0 0 5 15"><path d="m0 3 2.500-3L5 3zM0 12l2.500 3L5 12z" fill="#555"/></svg></span><span class="ml-[5px]">mm</span></label>
  </div>
  <div class="min-h-0 flex-1 bg-black">
    <svg class="h-full w-full font-['Liberation_Serif',serif] font-bold" viewBox="308 145 751 468" fill="none">
      <g font-size="15" fill="#c0c0c0"><text x="556" y="403">1380</text><text x="560" y="552">200</text><text x="602" y="591">200</text><text x="696" y="591">800</text><text x="791" y="591">200</text></g>
      <path d="M565 268.500h28M565 528.500h28M565 566.500h28M569.500 264v306M566 265l7 7M566 525l7 7M566 563l7 7M588 591.500h238M593.500 567v27M631.500 567v27M782.500 567v27M820.500 567v27M591 594l5-5M629 594l5-5M780 594l5-5M818 594l5-5" stroke="#008000"/>
      <path d="M593 268.500h228M593 528.500h228M631.500 528v38M782.500 528v38" stroke="#c0c0c0"/>
      <path d="M593 260.500h228M593.500 257v7M631.500 257v7M782.500 257v7M820.500 257v7M591 264l6-6M629 264l6-6M780 264l6-6M818 264l6-6M593 574.500h228M593.500 570v8M631.500 570v8M782.500 570v8M820.500 570v8M591 578l6-6M629 578l6-6M780 578l6-6M818 578l6-6M586.500 268v299M582 268.500h8M582 528.500h8M582 566.500h8M583 265l7 7M583 525l7 7M583 563l7 7M827.500 268v299M823 268.500h8M823 528.500h8M823 566.500h8M824 265l7 7M824 525l7 7M824 563l7 7" stroke="#fff"/>
      <path d="M593.500 268.500h38v260h151v-260h38v298h-227z" stroke="#f00" stroke-width="3"/>
      <g font-size="18" fill="#0f0"><text x="599" y="254">200</text><text x="693" y="254">800</text><text x="788" y="254">200</text><text x="551" y="404">1380</text><text x="827" y="404">1380</text><text x="560" y="553">200</text><text x="827" y="553">200</text><text x="599" y="592">200</text><text x="693" y="592">800</text><text x="788" y="592">200</text></g>
    </svg>
  </div>
  <div class="flex h-[28px] shrink-0 items-start border-b border-[#999]"><button class="h-[26px] rounded bg-[#fafafa] px-[7px]">动态输入</button></div>
  <div class="flex h-[41px] shrink-0 items-center justify-end border-t border-white pr-[13px] font-['Noto_Sans_Mono_CJK_SC','Noto_Sans_CJK_SC',monospace]">
    <button class="h-[23px] w-[105px] whitespace-nowrap border border-[#adadad] bg-[#e1e1e1]">从CAD选择截面图</button>
    <button class="ml-[23px] h-[23px] w-[113px] whitespace-nowrap border border-[#adadad] bg-[#e1e1e1]">在CAD中绘制截面图</button>
    <button class="ml-[25px] h-[23px] w-[72px] border border-[#adadad] bg-[#e1e1e1]">确定</button>
    <button class="ml-[15px] h-[23px] w-[72px] border border-[#adadad] bg-[#e1e1e1]">取消</button>
  </div>
  <div class="flex h-[22px] shrink-0 gap-[2px] whitespace-nowrap pb-px font-['Noto_Sans_Mono_CJK_SC','Noto_Sans_CJK_SC',monospace] leading-[19px]">
    <div class="w-[148px] border border-[#d5d5d5] bg-linear-to-b from-white to-[#eee] pl-px">坐标 (X: -1234 Y: 2224)</div>
    <div class="w-[148px] border border-[#d5d5d5] bg-linear-to-b from-white to-[#eee] pl-px">命令: 无</div>
    <div class="flex flex-1 items-end justify-between border border-[#d5d5d5] bg-linear-to-b from-white to-[#eee] pl-px"><span>绘图结束</span><svg class="size-[11px]" viewBox="0 0 11 11"><path d="M9 0h2v2H9zM5 4h2v2H5zM9 4h2v2H9zM1 8h2v2H1zM5 8h2v2H5zM9 8h2v2H9z" fill="#bbb"/></svg></div>
  </div>
</section>

<!-- grid definition dialog -->
<form class="absolute left-[119px] top-[215px] flex h-[223px] w-[411px] flex-col border border-[#3a8fdc] bg-[#f0f0f0] font-['Noto_Sans_Mono_CJK_SC','Noto_Sans_CJK_SC',monospace] shadow-[0_4px_14px_rgba(0,0,0,0.45)]">
  <div class="flex h-[25px] shrink-0 items-center justify-between bg-white pl-[3px] pr-[10px] font-['Noto_Sans_CJK_SC',sans-serif]"><h2>定义网格</h2><button type="button" aria-label="关闭"><svg class="size-[10px]" viewBox="0 0 10 10"><path d="m0 0 10 10M10 0 0 10" stroke="#222" stroke-width="1.300"/></svg></button></div>
  <fieldset class="mx-[13px] mt-[14px] h-[66px] border border-[#dcdcdc] px-[7px]">
    <legend class="whitespace-nowrap"><label for="hgap">水平方向间距(mm)=&gt;间距*个数,间距,间距*个数,间距,...</label></legend>
    <div id="hgap" role="textbox" contenteditable="true" class="mt-[2px] h-[41px] w-[365px] border border-[#5a7a9a] bg-white pl-px leading-4"><span class="border-r border-[#f08020] bg-[#0078d7] text-white">200,800,200</span></div>
  </fieldset>
  <fieldset class="mx-[13px] mt-[7px] h-[66px] border border-[#dcdcdc] px-[7px]">
    <legend class="whitespace-nowrap"><label for="vgap">垂直方向间距(mm)=&gt;间距*个数,间距,间距*个数,间距,...</label></legend>
    <textarea id="vgap" class="mt-[2px] block h-[41px] w-[365px] resize-none border border-[#7a7a7a] bg-white pl-px leading-4">200,1380</textarea>
  </fieldset>
  <div class="mt-[12px] flex justify-end gap-[15px] pr-[14px]">
    <button type="button" class="h-[23px] w-[72px] border border-[#adadad] bg-[#e1e1e1]">确定</button>
    <button type="button" class="h-[23px] w-[72px] border border-[#adadad] bg-[#e1e1e1]">取消</button>
  </div>
</form>

<!-- input method bar -->
<div class="absolute left-[712px] top-[3px] flex h-[24px] w-[196px] items-center gap-[6px] border border-[#b8cbe0] bg-white pl-[21px] text-[#1c72c4]">
  <svg class="absolute -left-[13px] -top-[4px] size-[29px]"><use href="#sogou"/></svg>
  <svg class="h-[14px] w-[16px] shrink-0" viewBox="0 0 16 14"><path d="M2 3.500h12v6H2zM8 0v14" fill="none" stroke="currentColor" stroke-width="2"/></svg>
  <svg class="size-4 shrink-0" viewBox="0 0 16 16"><circle cx="4" cy="5" r="2" fill="none" stroke="currentColor" stroke-width="1.500"/><path d="M9 8h3v3l-3 4v-3z" fill="currentColor"/></svg>
  <svg class="size-4 shrink-0" viewBox="0 0 16 16"><circle cx="8" cy="8" r="7" fill="none" stroke="currentColor" stroke-width="1.800"/><path d="M5 5h2v2H5zM9 5h2v2H9z" fill="currentColor"/><path d="M4 9q4 5 8 0" fill="none" stroke="currentColor" stroke-width="1.500"/></svg>
  <svg class="size-4 shrink-0" viewBox="0 0 16 16"><rect x="5" width="6" height="10" rx="3" fill="currentColor"/><path d="M3 6q0 6 5 6t5-6M8 12v4M5 15h6" fill="none" stroke="currentColor" stroke-width="1.500"/></svg>
  <svg class="size-4 shrink-0" viewBox="0 0 16 14"><path d="M0 1h16v12H0z" fill="currentColor"/><path d="M2 4h12M2 7h12" stroke="#fff" stroke-width="1.500" stroke-dasharray="2 1"/><path d="M4 10.500h8" stroke="#fff" stroke-width="1.500"/></svg>
  <svg class="ml-[2px] size-[17px] shrink-0" viewBox="0 0 16 16"><path d="M3 3.500a3 3 0 0 1 6 0q0 2-1.500 3.500H11v5H0q0-4 4.500-5Q3 6 3 3.500" fill="#b3bdcc"/><path d="M5.500 8.500h10v6h-10z" fill="#fff" stroke="#b3bdcc"/><path d="M7 11h3m2 0h2m-7 2h7" stroke="#b3bdcc"/></svg>
  <svg class="size-[14px] shrink-0" viewBox="0 0 16 16"><path d="M5 1q3 2 6 0l5 3-2 4-2-1v8H4V7L2 8 0 4z" fill="currentColor"/></svg>
  <svg class="size-[15px] shrink-0" viewBox="0 0 16 16"><path d="M15 4l-3 2-2-2 2-3q-5-1-6 4v2l-6 6q0 3 3 3l6-6q7 0 6-6" fill="currentColor"/></svg>
</div>

<!-- floating speed ball -->
<div class="absolute -top-[30px] left-[1041px] flex size-[48px] items-end justify-center rounded-full border-2 border-[#dcdcdc] bg-[#3fcb5c] text-xs font-bold leading-4 text-white shadow-md ring-1 ring-inset ring-[#1f8a4a]">69</div>

<!-- highlight frames -->
<div class="pointer-events-none absolute left-[302px] top-[56px] h-[76px] w-[131px] border-3 border-[#f00]"></div>
<div class="pointer-events-none absolute left-[91px] top-[186px] h-[58px] w-[104px] border-3 border-[#f00]"></div>

<script>
  // [label, icon, depth, state]; depth 0 rows are folders
  const modules = [
    ['过梁(G)', 'i-col', 1], ['带形洞', 'i-hole', 1], ['带形窗', 'i-win', 1],
    ['梁', 'folderopen', 0, 'open'], ['梁(L)', 'i-beam', 1], ['圈梁(E)', 'i-ring', 1],
    ['板', 'folder', 0, 'closed'],
    ['基础', 'folderopen', 0, 'open'], ['基础梁(F)', 'i-fbeam', 1], ['筏板基础(M)', 'i-raft', 1], ['集水坑(K)', 'i-pit', 1],
    ['柱墩(Y)', 'i-pier', 1], ['筏板主筋(R)', 'i-bar', 1], ['筏板负筋(X)', 'i-bar2', 1], ['独立基础(D)', 'i-iso', 1],
    ['条形基础(T)', 'i-strip', 1], ['桩承台(V)', 'i-cap', 1], ['承台梁(F)', 'i-fbeam', 1], ['桩(U)', 'i-pile', 1], ['基础板带(W)', 'i-band', 1],
    ['其它', 'folderopen', 0, 'open'], ['后浇带(JD)', 'i-post', 1], ['挑檐(T)', 'i-eave', 1], ['栏板(K)', 'i-rail', 1], ['压顶(YD)', 'i-top', 1],
    ['自定义', 'folderopen', 0, 'open'], ['自定义点', 'i-pt', 1], ['自定义线(X)', 'i-line', 1, 'selected'], ['自定义面', 'i-face', 1], ['尺寸标注(W)', 'i-dim', 1]
  ];
  document.getElementById('modules').innerHTML = modules.map(([label, icon, depth, state], i) => {
    if (depth === 0) {
      const arrow = state === 'open'
        ? '<path d="m1 3 4 4 4-4" fill="none" stroke="#444" stroke-width="1.500"/>'
        : '<path d="m3 1 4 4-4 4" fill="none" stroke="#999" stroke-width="1.500"/>';
      return `<li class="flex h-4 items-center whitespace-nowrap pl-[7px]"><svg class="size-[10px]" viewBox="0 0 10 10">${arrow}</svg><span class="w-[6px]"></span><svg class="h-4 w-[17px]" viewBox="0 0 16 16"><use href="#${icon}"/></svg><span class="ml-[4px]">${label}</span></li>`;
    }
    const last = !modules[i + 1] || modules[i + 1][2] === 0;
    const outer = i < 25 ? '<path d="M12.500 0v16" stroke="#888" stroke-dasharray="1 1"/>' : '';
    const lines = `<svg class="h-4 w-[41px] shrink-0" viewBox="0 0 41 16">${outer}<path d="M31.500 0v${last ? 8 : 16}M32 8.500h9" fill="none" stroke="#888" stroke-dasharray="1 1"/></svg>`;
    const sel = state === 'selected';
    return `<li class="flex h-4 items-center whitespace-nowrap">${lines}<span class="flex h-4 items-center gap-[5px] pl-[2px] ${sel ? 'bg-[#d9d9d9]' : ''}"><svg class="size-4 shrink-0"><use href="#${icon}"/></svg><span>${label}</span></span>${sel ? '<svg class="ml-px h-[14px] w-[12px] shrink-0" viewBox="0 0 12 14"><path d="M.500.500h4.500v13H.500zM7 .500h4.500v13H7z" fill="#fff" stroke="#1e78d0"/><path d="M1 4.500h3M1 7.500h3M1 10.500h3M8 4.500h3M8 7.500h3M8 10.500h3" stroke="#1e78d0"/></svg>' : ''}</li>`;
  }).join('');

  // polygon components ZDYX-14 … ZDYX-47
  document.getElementById('components').innerHTML = Array.from({ length: 34 }, (_, k) => {
    const n = k + 14, last = n === 47;
    return `<li class="flex h-4 items-center"><svg class="h-4 w-[39px]" viewBox="0 0 39 16"><path d="M30.500 0v${last ? 8 : 16}M31 8.500h9" stroke="#888" stroke-dasharray="1 1"/></svg><span class="flex h-4 items-center gap-[7px] px-[4px] ${last ? 'bg-[#316ac5]' : ''}"><svg class="size-[12px]"><use href="#gear"/></svg><span>ZDYX-${n}</span></span></li>`;
  }).join('');
</script>
</body>
</html>
